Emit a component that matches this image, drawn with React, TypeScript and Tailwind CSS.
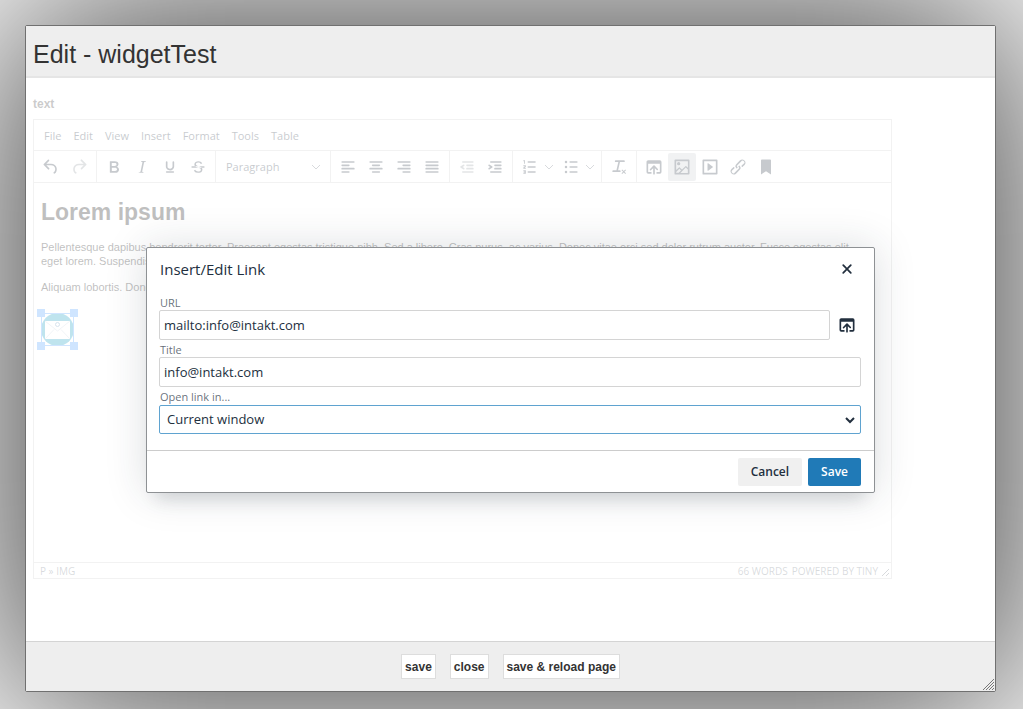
import React, { useState } from 'react';

const icons: Record<string, string> = {
  undo: "M6.4 8H12c3.7 0 6.2 2 6.8 5.1.6 2.7-.4 5.6-2.3 6.8a1 1 0 01-1-1.8c1.1-.6 1.8-2.7 1.4-4.6-.5-2.1-2.1-3.5-4.9-3.5H6.4l3.3 3.3a1 1 0 11-1.4 1.4l-5-5a1 1 0 010-1.4l5-5a1 1 0 011.4 1.4L6.4 8z",
  redo: "M17.6 10H12c-2.8 0-4.4 1.4-4.9 3.5-.4 2 .3 4 1.4 4.6a1 1 0 11-1 1.8c-2-1.2-2.9-4.1-2.3-6.8.6-3 3-5.1 6.8-5.1h5.6l-3.3-3.3a1 1 0 111.4-1.4l5 5a1 1 0 010 1.4l-5 5a1 1 0 01-1.4-1.4l3.3-3.3z",
  bold: "M7.8 19c-.3 0-.5 0-.6-.2l-.2-.5V5.7c0-.2 0-.4.2-.5l.6-.2h5c1.5 0 2.7.3 3.5 1 .7.6 1.1 1.4 1.1 2.5a3 3 0 01-.6 1.9c-.4.6-1 1-1.6 1.2.4.1.9.3 1.3.6s.8.7 1 1.2c.4.4.5 1 .5 1.6 0 1.3-.4 2.3-1.3 3-.8.7-2.1 1-3.8 1H7.8zm5-8.3c.6 0 1.2-.1 1.6-.5.4-.3.6-.7.6-1.3 0-1.1-.8-1.7-2.3-1.7H9.3v3.5h3.4zm.5 6c.7 0 1.3-.1 1.7-.4.4-.4.6-.9.6-1.5s-.2-1-.7-1.4c-.4-.3-1-.4-2-.4H9.4v3.8h4z",
  italic: "M16.7 4.7l-.1.9h-.3c-.6 0-1 0-1.4.3-.3.3-.4.6-.5 1.1l-2.1 9.8v.6c0 .5.4.8 1.4.8h.2l-.2.8H8l.2-.8h.2c1.1 0 1.8-.5 2-1.5l2-9.8.1-.5c0-.6-.4-.8-1.4-.8h-.3l.2-.9h5.8z",
  underline: "M16 5c.6 0 1 .4 1 1v5.5a4 4 0 01-.4 1.8l-1 1.4a5.3 5.3 0 01-5.5 1 5 5 0 01-1.6-1c-.5-.4-.8-.9-1.1-1.4a4 4 0 01-.4-1.8V6c0-.6.4-1 1-1s1 .4 1 1v5.5c0 .3 0 .6.2 1l.6.7a3.3 3.3 0 002.2.8 3.4 3.4 0 002.2-.8c.3-.2.4-.5.6-.8l.2-.9V6c0-.6.4-1 1-1zM8 17h8c.6 0 1 .4 1 1s-.4 1-1 1H8a1 1 0 010-2z",
  strikethrough: "M15.6 8.5c-.5-.7-1-1.1-1.3-1.3-.6-.4-1.3-.6-2-.6-2.7 0-2.8 1.7-2.8 2.1 0 1.6 1.8 2 3.2 2.3 4.4.9 4.6 2.8 4.6 3.9 0 1.4-.7 4.1-5 4.1A6.2 6.2 0 017 16.4l1.5-1.1c.4.6 1.6 2 3.7 2 1.6 0 2.5-.4 3-1.2.4-.8.3-2-.8-2.6-.7-.4-1.6-.7-2.9-1-1-.2-3.9-.8-3.9-3.6C7.6 6 10.3 5 12.4 5c2.9 0 4.2 1.6 4.7 2.4l-1.5 1.1zM5 11h14a1 1 0 010 2H5a1 1 0 010-2z",
  "align left": "M5 5h14a1 1 0 010 2H5a1 1 0 010-2zm0 4h8a1 1 0 010 2H5a1 1 0 010-2zm0 4h14a1 1 0 010 2H5a1 1 0 010-2zm0 4h8a1 1 0 010 2H5a1 1 0 010-2z",
  "align center": "M5 5h14a1 1 0 010 2H5a1 1 0 010-2zm3 4h8a1 1 0 010 2H8a1 1 0 010-2zm-3 4h14a1 1 0 010 2H5a1 1 0 010-2zm3 4h8a1 1 0 010 2H8a1 1 0 010-2z",
  "align right": "M5 5h14a1 1 0 010 2H5a1 1 0 010-2zm6 4h8a1 1 0 010 2h-8a1 1 0 010-2zm-6 4h14a1 1 0 010 2H5a1 1 0 010-2zm6 4h8a1 1 0 010 2h-8a1 1 0 010-2z",
  justify: "M5 5h14a1 1 0 010 2H5a1 1 0 010-2zm0 4h14a1 1 0 010 2H5a1 1 0 010-2zm0 4h14a1 1 0 010 2H5a1 1 0 010-2zm0 4h14a1 1 0 010 2H5a1 1 0 010-2z",
  outdent: "M7 5h12a1 1 0 010 2H7a1 1 0 010-2zm5 4h7a1 1 0 010 2h-7a1 1 0 010-2zm0 4h7a1 1 0 010 2h-7a1 1 0 010-2zm-5 4h12a1 1 0 010 2H7a1 1 0 010-2zm1.6-3.8a1 1 0 01-1.2 1.6l-3-2a1 1 0 010-1.6l3-2a1 1 0 011.2 1.6L6.8 12l1.8 1.2z",
  indent: "M7 5h12a1 1 0 010 2H7a1 1 0 010-2zm5 4h7a1 1 0 010 2h-7a1 1 0 010-2zm0 4h7a1 1 0 010 2h-7a1 1 0 010-2zm-5 4h12a1 1 0 010 2H7a1 1 0 010-2zm-2.6-3.8L6.2 12l-1.8-1.2a1 1 0 011.2-1.6l3 2a1 1 0 010 1.6l-3 2a1 1 0 11-1.2-1.6z",
  "numbered list": "M10 17h8a1 1 0 010 2h-8a1 1 0 010-2zm0-6h8a1 1 0 010 2h-8a1 1 0 010-2zm0-6h8a1 1 0 010 2h-8a1 1 0 010-2zM6 4v4H5V5H4V4h2zm-2 6h3v2l-1.5 1.2H7v1H4v-1.5L6 11H4v-1zm0 6h3v4H4v-1h2v-.5H4.500v-1H6V17H4v-1z",
  "bullet list": "M11 5h8a1 1 0 010 2h-8a1 1 0 010-2zm0 6h8a1 1 0 010 2h-8a1 1 0 010-2zm0 6h8a1 1 0 010 2h-8a1 1 0 010-2zM4.500 6a1.500 1.500 0 113 0 1.500 1.500 0 11-3 0zm0 6a1.500 1.500 0 113 0 1.500 1.500 0 11-3 0zm0 6a1.500 1.500 0 113 0 1.500 1.500 0 11-3 0z",
  "clear formatting": "M13.2 6l-2.300 10H13a1 1 0 010 2H5a1 1 0 010-2h3.900l2.300-10H8a1 1 0 010-2h10a1 1 0 010 2h-4.800zM15 15.800l.8-.8 1.900 1.900 1.900-1.900.8.8-1.900 1.900 1.900 1.900-.8.8-1.900-1.900-1.900 1.900-.8-.8 1.900-1.900-1.900-1.900z",
  browse: "M19 4a2 2 0 012 2v12a2 2 0 01-2 2h-4v-2h4V8H5v10h4v2H5a2 2 0 01-2-2V6c0-1.100.9-2 2-2h14zm-8 9.400l-2.300 2.300a1 1 0 11-1.400-1.400l4-4a1 1 0 011.400 0l4 4a1 1 0 01-1.400 1.400L13 13.400V20a1 1 0 01-2 0v-6.600z",
  image: "M5 15.700l3.300-3.200c.3-.3.7-.3 1 0L12 15l4.100-4c.3-.4.8-.4 1 0l2 1.900V5H5v10.700zM5 18V19h3l2.800-2.900-2-2L5 17.900zm14-3l-2.500-2.400-6.400 6.500H19v-4zM4 3h16c.6 0 1 .4 1 1v16c0 .6-.4 1-1 1H4a1 1 0 01-1-1V4c0-.6.4-1 1-1zm6 5a2 2 0 11-4 0 2 2 0 014 0z",
  media: "M4 3h16c.6 0 1 .4 1 1v16c0 .6-.4 1-1 1H4a1 1 0 01-1-1V4c0-.6.4-1 1-1zm1 2v14h14V5H5zm4.800 2.600l5.600 4a.5.5 0 010 .8l-5.600 4A.5.5 0 019 16V8a.5.5 0 01.8-.4z",
  link: "M6.200 12.300a1 1 0 011.400 1.400l-2.100 2a2 2 0 102.700 2.800l4.800-4.800a1 1 0 000-1.400 1 1 0 111.400-1.300 2.900 2.900 0 010 4L9.600 20a3.900 3.900 0 01-5.500-5.500l2-2zm11.600-.6a1 1 0 01-1.400-1.400l2-2a2 2 0 10-2.600-2.800L11 10.300a1 1 0 000 1.400A1 1 0 119.600 13a2.900 2.900 0 010-4L14.400 4a3.900 3.900 0 015.500 5.500l-2 2z",
  bookmark: "M6 4v17l6-4 6 4V4c0-.6-.4-1-1-1H7a1 1 0 00-1 1z",
  close: "M17.300 8.200L13.400 12l3.900 3.800a1 1 0 01-1.500 1.500L12 13.400l-3.800 3.900a1 1 0 01-1.500-1.500l3.900-3.800-3.900-3.800a1 1 0 011.500-1.500l3.800 3.900 3.800-3.900a1 1 0 011.500 1.500z",
};

const Icon: React.FC<{ name: string; className?: string }> = ({ name, className = "w-5 h-5" }) => (
  <svg viewBox="0 0 24 24" fill="currentColor" fillRule="evenodd" className={className} aria-hidden="true">
    <path d={icons[name]} />
  </svg>
);

const Chevron: React.FC<{ className?: string; width?: number }> = ({ className, width = 1 }) => (
  <svg viewBox="0 0 10 10" fill="none" stroke="currentColor" strokeWidth={width} className={className} aria-hidden="true">
    <path d="M1 3l4 4 4-4" />
  </svg>
);

const ToolButton: React.FC<{ name: string; disabled?: boolean; active?: boolean }> = ({ name, disabled, active }) => (
  <button
    type="button"
    title={name}
    disabled={disabled}
    className={`w-7 h-7 flex items-center justify-center rounded-xs disabled:opacity-50 ${active ? "bg-[#c8cbcf]" : ""}`}
  >
    <Icon name={name} />
  </button>
);

const ListButton: React.FC<{ name: string }> = ({ name }) => (
  <div className="flex w-[41px]">
    <button type="button" title={name} className="w-7 h-7 flex items-center justify-center">
      <Icon name={name} />
    </button>
    <button type="button" title={`${name} options`} className="flex items-center opacity-70">
      <Chevron className="w-[10px] h-[10px]" />
    </button>
  </div>
);

const Group: React.FC<{ children: React.ReactNode; last?: boolean }> = ({ children, last }) => (
  <div className={`flex items-center px-[3px] ${last ? "" : "border-r border-[#ccc]"}`}>{children}</div>
);

const menus = ["File", "Edit", "View", "Insert", "Format", "Tools", "Table"];

const Editor: React.FC = () => (
  <div className="flex-1 flex flex-col mr-[96px] border border-[#ccc] font-['Open_Sans',sans-serif] text-[#222f3e]">
    <div className="flex items-center h-[31px] px-1 pt-[2px] border-b border-[#ccc]">
      {menus.map((menu) => (
        <button key={menu} type="button" className="px-[6px] text-[11px]">
          {menu}
        </button>
      ))}
    </div>
    <div className="flex h-8 border-b border-[#ccc]">
      <Group>
        <ToolButton name="undo" />
        <ToolButton name="redo" disabled />
      </Group>
      <Group>
        <ToolButton name="bold" />
        <ToolButton name="italic" />
        <ToolButton name="underline" />
        <ToolButton name="strikethrough" />
      </Group>
      <Group>
        <div className="relative w-[108px]">
          <select aria-label="Block format" className="w-full h-7 pl-[7px] pt-[2px] text-[11px] appearance-none">
            <option>Paragraph</option>
          </select>
          <Chevron className="absolute right-[6px] top-[9px] w-[10px] h-[10px] opacity-70" />
        </div>
      </Group>
      <Group>
        <ToolButton name="align left" />
        <ToolButton name="align center" />
        <ToolButton name="align right" />
        <ToolButton name="justify" />
      </Group>
      <Group>
        <ToolButton name="outdent" disabled />
        <ToolButton name="indent" />
      </Group>
      <Group>
        <ListButton name="numbered list" />
        <ListButton name="bullet list" />
      </Group>
      <Group>
        <ToolButton name="clear formatting" />
      </Group>
      <Group last>
        <ToolButton name="browse" />
        <ToolButton name="image" active />
        <ToolButton name="media" />
        <ToolButton name="link" />
        <ToolButton name="bookmark" />
      </Group>
    </div>
    <div className="flex-1 px-[7px] pt-[15px] font-['Liberation_Sans',sans-serif] text-[11px] leading-[14px] text-black">
      <h1 className="text-[23px] leading-7 font-bold mb-[14px]">Lorem ipsum</h1>
      <p className="mb-3">
        Pellentesque dapibus hendrerit tortor. Praesent egestas tristique nibh. Sed a libero. Cras purus, ac varius. Donec vitae orci sed dolor rutrum auctor. Fusce egestas elit
        <br />
        eget lorem. Suspendisse
      </p>
      <p className="mb-[15px]">Aliquam lobortis. Donec</p>
      <svg width="42" height="42" viewBox="0 0 42 42" className="-ml-1" aria-label="Mail">
        <circle cx="20.500" cy="20.500" r="16.500" fill="#0092bd" />
        <path d="M8 12h25v18H8z" fill="#fff" />
        <path d="M8 12l12.500 10L33 12M8 30l9-9.500M33 30l-9-9.500" fill="none" stroke="#c5d3e0" />
        <circle cx="20.500" cy="15.500" r="2" fill="none" stroke="#5f8fb5" />
        <path d="M4.500 4.500h32v32h-32z" fill="none" stroke="#4099ff" />
        <path d="M0 0h8v8H0zM33 0h8v8h-8zM0 33h8v8H0zM33 33h8v8h-8z" fill="#4099ff" />
      </svg>
    </div>
    <div className="flex items-center h-4 pl-[6px] border-t border-[#ccc] text-[10px] leading-[14px] text-[#222f3e]/70">
      <span className="flex-1">P » IMG</span>
      <span className="mr-1">66 WORDS</span>
      <a href="#tiny">POWERED BY TINY</a>
      <svg viewBox="0 0 10 10" className="w-[10px] h-[10px] ml-[3px] mt-1" stroke="currentColor" fill="none" aria-hidden="true">
        <path d="M1 8l7-7M5 8l3-3" />
      </svg>
    </div>
  </div>
);

const LinkDialog: React.FC = () => {
  const [url, setUrl] = useState("mailto:info@intakt.com");
  const [title, setTitle] = useState("info@intakt.com");
  const [target, setTarget] = useState("current");

  return (
    <div
      role="dialog"
      aria-labelledby="dialog-title"
      className="absolute inset-x-0 top-[169px] mx-auto w-[729px] max-w-full bg-white border border-[#8e9194] rounded-xs shadow-[0_16px_16px_-10px_rgba(34,47,62,0.15),0_0_40px_1px_rgba(34,47,62,0.15)] font-['Open_Sans',sans-serif] text-[#222f3e]"
    >
      <div className="flex items-center justify-between h-[42px] pl-[13px] pr-[17px]">
        <h2 id="dialog-title" className="text-[15px]">Insert/Edit Link</h2>
        <button type="button" title="Close">
          <Icon name="close" />
        </button>
      </div>
      <div className="pl-3 pr-[13px] pt-[3px] pb-4">
        <label htmlFor="url" className="block h-[17px] pl-px pt-[2px] text-[11px] leading-4 text-[#222f3e]/70">URL</label>
        <div className="flex items-center">
          <input
            id="url"
            value={url}
            onChange={(e) => setUrl(e.target.value)}
            className="flex-1 h-[30px] px-1 border border-[#d4d4d4] rounded-xs text-[13px]"
          />
          <button type="button" title="Browse" className="w-[31px] flex justify-center pl-[3px]">
            <Icon name="browse" />
          </button>
        </div>
        <label htmlFor="title" className="block h-[17px] pl-px pt-[2px] text-[11px] leading-4 text-[#222f3e]/70">Title</label>
        <input
          id="title"
          value={title}
          onChange={(e) => setTitle(e.target.value)}
          className="w-full h-[30px] px-1 border border-[#d4d4d4] rounded-xs text-[13px] block"
        />
        <label htmlFor="target" className="block h-[18px] pl-px pt-[2px] text-[11px] leading-4 text-[#222f3e]/70">Open link in...</label>
        <div className="relative">
          <select
            id="target"
            value={target}
            onChange={(e) => setTarget(e.target.value)}
            className="w-full h-[29px] px-[7px] border border-[#5fa3d0] rounded-xs text-[13px] appearance-none block"
          >
            <option value="current">Current window</option>
            <option value="new">New window</option>
          </select>
          <Chevron className="absolute right-[6px] top-[10px] w-[10px] h-[10px]" width={2} />
        </div>
      </div>
      <div className="flex justify-end gap-[6px] pt-[7px] pb-[6px] pr-[13px] border-t border-[#ccc] text-xs font-semibold">
        <button type="button" className="h-7 px-[13px] bg-[#f0f0f0] rounded-xs">Cancel</button>
        <button type="button" className="h-7 px-[13px] bg-[#207ab7] text-white rounded-xs">Save</button>
      </div>
    </div>
  );
};

const App: React.FC = () => {
  return (
    <div className="min-h-screen flex flex-col pt-[25px] pl-[25px] pr-[27px] pb-[17px] bg-white overflow-hidden font-['Liberation_Sans',sans-serif]">
      <div className="relative flex-1 flex flex-col border border-[#707070] rounded-xs bg-white shadow-[0_0_200px_20px_rgba(0,0,0,0.74)]">
        <header className="h-[52px] px-[7px] pt-2 flex items-center bg-[#eee] border-b-2 border-[#e5e5e5]">
          <h1 className="text-[25px] text-[#333]">Edit - widgetTest</h1>
        </header>

        <main className="relative flex-1 flex flex-col px-[7px] pt-[18px] pb-[62px]">
          <h2 className="h-[23px] text-xs font-bold text-[#333]">text</h2>
          <Editor />
          <div className="absolute inset-0 bg-white/75" />
          <LinkDialog />
        </main>

        <footer className="relative h-[50px] flex items-center justify-center gap-[14px] bg-[#eee] border-t border-[#d4d4d4] text-xs font-bold text-[#333]">
          <button type="button" className="h-[25px] px-[3px] bg-white border border-[#ddd]">save</button>
          <button type="button" className="h-[25px] px-[3px] bg-white border border-[#ddd]">close</button>
          <button type="button" className="h-[25px] px-[3px] bg-white border border-[#ddd]">save &amp; reload page</button>
          <svg viewBox="0 0 13 13" className="absolute right-0 bottom-0 w-[13px] h-[13px]" stroke="#777" fill="none" aria-hidden="true">
            <path d="M1 12L12 1M4 12l8-8M7 12l5-5M10 12l2-2" />
          </svg>
        </footer>
      </div>
    </div>
  );
};

export default App;
